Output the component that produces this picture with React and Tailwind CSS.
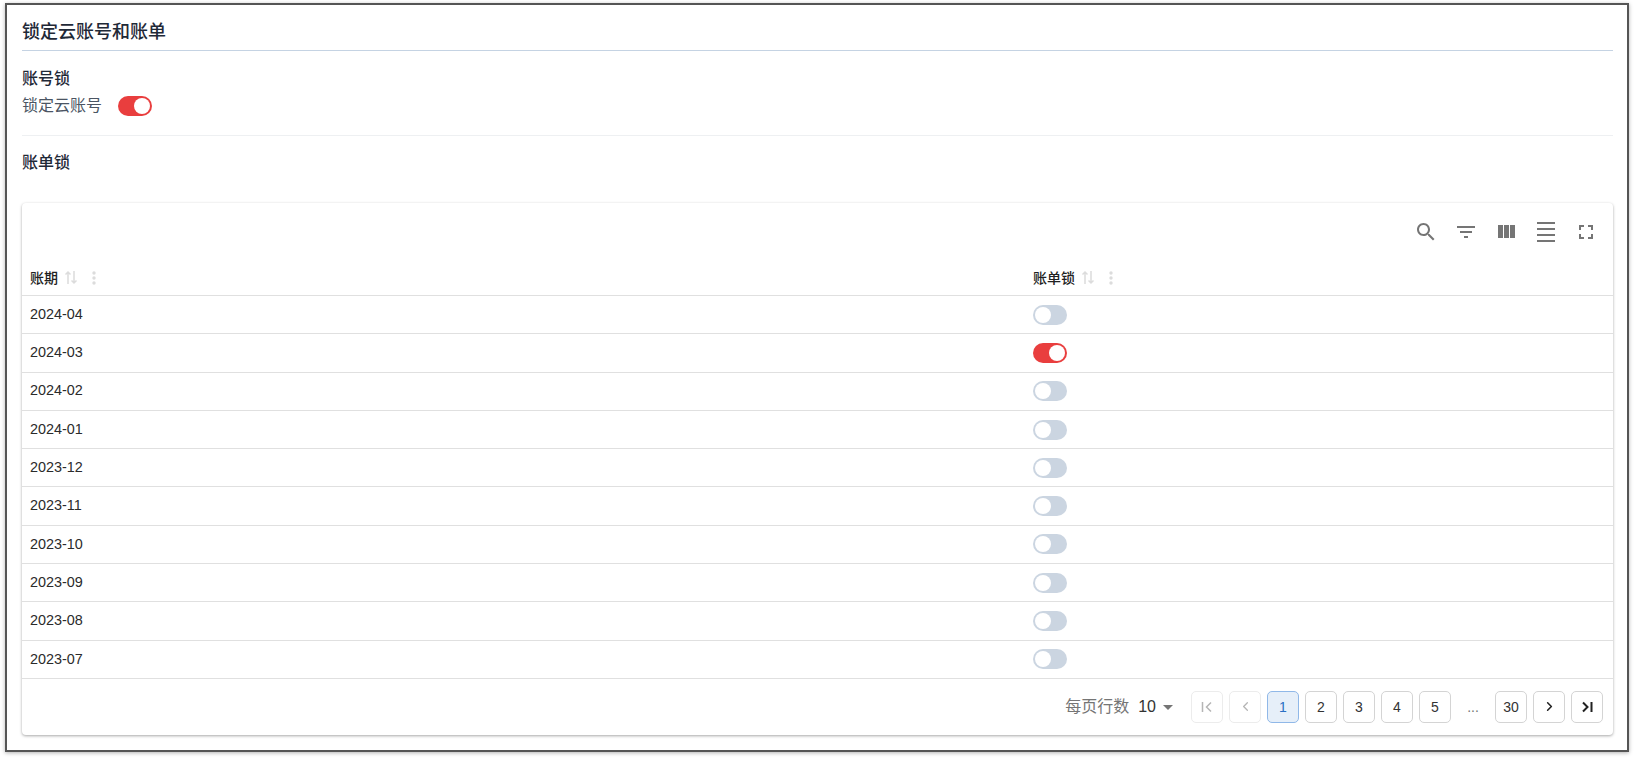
import React from 'react';
import { ChevronLeft, ChevronRight } from 'lucide-react';

const rows = [
  ['2024-04', false],
  ['2024-03', true],
  ['2024-02', false],
  ['2024-01', false],
  ['2023-12', false],
  ['2023-11', false],
  ['2023-10', false],
  ['2023-09', false],
  ['2023-08', false],
  ['2023-07', false],
];

const Toggle = ({ on }) => (
  <div className={`flex h-5 w-[34px] items-center rounded-full px-[2px] ${on ? 'justify-end bg-[#e93e3e]' : 'justify-start bg-[#cbd5e1]'}`}>
    <div className="h-4 w-4 rounded-full bg-white" />
  </div>
);

const SortIcon = () => (
  <svg width="14" height="15" viewBox="0 0 14 15" fill="none" stroke="#dcdcdc" strokeWidth="1.5">
    <path d="M4 14V2M1.500 4.500 4 2l2.500 2.500" />
    <path d="M10 1v12M7.500 10.500 10 13l2.500-2.500" />
  </svg>
);

const DotsIcon = () => (
  <svg width="4" height="14" viewBox="0 0 4 14" fill="#dcdcdc">
    <circle cx="2" cy="2" r="1.700" />
    <circle cx="2" cy="7" r="1.700" />
    <circle cx="2" cy="12" r="1.700" />
  </svg>
);

const HeaderCell = ({ label, className }) => (
  <div className={`flex items-center gap-[6px] text-sm font-medium text-[#212121] ${className}`}>
    <span>{label}</span>
    <SortIcon />
    <span className="ml-2 flex"><DotsIcon /></span>
  </div>
);

const PageButton = ({ children, active, disabled }) => (
  <div
    className={`flex h-8 w-8 items-center justify-center rounded-[5px] border text-sm ${
      active
        ? 'border-[#90b8e8] bg-[#e6eff9] text-[#2a6fc4]'
        : disabled
          ? 'border-[#ececec] text-[#aaaaaa]'
          : 'border-[#d4d4d4] text-[#333333]'
    }`}
  >
    {children}
  </div>
);

export default function App() {
  return (
    <div className="h-[758px] w-[1634px] overflow-hidden bg-white pt-[3px] pl-[5px] font-['Liberation_Sans','Noto_Sans_CJK_SC',sans-serif]">
      <div className="h-[749px] w-[1624px] border-2 border-[#555555] bg-white pr-[14px] pl-[15px] shadow-[0_1px_4px_rgba(0,0,0,0.3)]">
        <div className="flex h-[46px] items-center border-b border-[#c5d3e3] pt-[9px] text-lg font-medium text-[#1f2937]">
          锁定云账号和账单
        </div>
        <div className="mt-[16px] text-base leading-[24px] font-medium text-[#1f2937]">账号锁</div>
        <div className="mt-[3px] flex h-[24px] items-center gap-[16px] text-base text-[#4b5563]">
          <span>锁定云账号</span>
          <Toggle on />
        </div>
        <div className="mt-[17px] border-t border-[#eef0f2]" />
        <div className="mt-[15px] text-base leading-[24px] font-medium text-[#1f2937]">账单锁</div>

        <div className="mt-[28px] rounded bg-white shadow-[0_1px_3px_rgba(0,0,0,0.35)]">
          <div className="flex h-[57px] items-center justify-end gap-[16px] pr-[15px] text-[#757575]">
            <svg width="24" height="24" viewBox="0 0 24 24" fill="#757575">
              <path d="M15.500 14h-.79l-.28-.27C15.410 12.590 16 11.110 16 9.500 16 5.910 13.090 3 9.500 3S3 5.910 3 9.500 5.910 16 9.500 16c1.610 0 3.090-.59 4.230-1.570l.27.28v.79l5 4.990L20.490 19l-4.990-5zm-6 0C7.010 14 5 11.990 5 9.500S7.010 5 9.500 5 14 7.010 14 9.500 11.990 14 9.500 14z" />
            </svg>
            <svg width="24" height="24" viewBox="0 0 24 24" fill="#757575">
              <path d="M10 18h4v-2h-4v2zM3 6v2h18V6H3zm3 7h12v-2H6v2z" />
            </svg>
            <svg width="24" height="24" viewBox="0 0 24 24" fill="#757575">
              <path d="M10 18h5V5h-5v13zm-6 0h5V5H4v13zM16 5v13h5V5h-5z" />
            </svg>
            <svg width="24" height="24" viewBox="0 0 24 24" fill="#757575">
              <path d="M3 2h18v2H3zM3 8h18v2H3zM3 14h18v2H3zM3 20h18v2H3z" />
            </svg>
            <svg width="24" height="24" viewBox="0 0 24 24" fill="#757575">
              <path d="M7 14H5v5h5v-2H7v-3zm-2-4h2V7h3V5H5v5zm12 7h-3v2h5v-5h-2v3zM14 5v2h3v3h2V5h-5z" />
            </svg>
          </div>

          <div className="flex h-[36px] items-center border-b border-[#e0e0e0]">
            <HeaderCell label="账期" className="w-[1011px] pl-2" />
            <HeaderCell label="账单锁" />
          </div>

          {rows.map(([period, on]) => (
            <div key={period} className="flex h-[38.3px] items-center border-b border-[#e0e0e0] text-[14.4px] text-[#2b2b2b]">
              <div className="w-[1011px] pl-2">{period}</div>
              <Toggle on={on} />
            </div>
          ))}

          <div className="flex h-[56px] items-center justify-end gap-[6px] pr-[10px]">
            <span className="text-base text-[#757575]">每页行数</span>
            <span className="ml-[3px] text-base text-[#333333]">10</span>
            <svg width="12" height="12" viewBox="0 0 12 12" fill="#757575" className="mr-[11px]">
              <path d="M1 4h10L6 9z" />
            </svg>
            <PageButton disabled>
              <svg width="14" height="14" viewBox="0 0 14 14" fill="none" stroke="#b5b5b5" strokeWidth="1.500">
                <path d="M2.500 2v10M11 2.500 6.500 7l4.500 4.500" />
              </svg>
            </PageButton>
            <PageButton disabled><ChevronLeft size={15} color="#b5b5b5" /></PageButton>
            <PageButton active>1</PageButton>
            <PageButton>2</PageButton>
            <PageButton>3</PageButton>
            <PageButton>4</PageButton>
            <PageButton>5</PageButton>
            <div className="flex h-8 w-8 items-center justify-center text-sm text-[#757575]">...</div>
            <PageButton>30</PageButton>
            <PageButton><ChevronRight size={15} color="#212121" strokeWidth={2.500} /></PageButton>
            <PageButton>
              <svg width="14" height="14" viewBox="0 0 14 14" fill="none" stroke="#212121" strokeWidth="2">
                <path d="M3 2.500 7.500 7 3 11.500M11.500 2v10" />
              </svg>
            </PageButton>
          </div>
        </div>
      </div>
    </div>
  );
}
